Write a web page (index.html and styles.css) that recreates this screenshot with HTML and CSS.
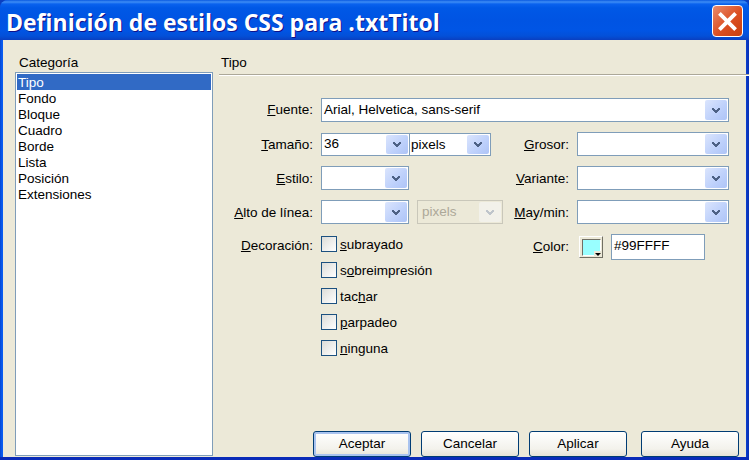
FILE: index.html
```html
<!DOCTYPE html>
<html lang="es">
<head>
<meta charset="utf-8">
<title>Definición de estilos CSS</title>
<link rel="stylesheet" href="styles.css">
</head>
<body>
<svg class="defs" width="0" height="0" aria-hidden="true"><defs>
<symbol id="chev" viewBox="0 0 10 7"><path d="M1 1h2v1h1v1h2V2h1V1h2v2H8v1H7v1H6v1H4V5H3V4H2V3H1z" fill="#4d6185"/></symbol>
</defs></svg>
<div class="window">
  <header class="titlebar">
    <h1 class="title">Definición de estilos CSS para .txtTitol</h1>
    <div class="close"><svg viewBox="0 0 20 20" width="20" height="20"><path d="M3 5l2-2 5 5 5-5 2 2-5 5 5 5-2 2-5-5-5 5-2-2 5-5z" fill="#fff"/></svg></div>
  </header>
  <main class="client">
    <section class="cat">
      <div class="cat-head">Categoría</div>
      <ul class="list">
        <li class="sel">Tipo</li><li>Fondo</li><li>Bloque</li><li>Cuadro</li><li>Borde</li><li>Lista</li><li>Posición</li><li>Extensiones</li>
      </ul>
    </section>
    <section class="panel">
      <div class="panel-head">Tipo</div>
      <div class="rule"></div>
      <div class="form">
        <div class="row row-font">
          <label class="lab"><u>F</u>uente:</label>
          <div class="combo w408"><span class="val">Arial, Helvetica, sans-serif</span><span class="arrow"><svg width="10" height="7"><use href="#chev"/></svg></span></div>
        </div>
        <div class="row row-size">
          <label class="lab"><u>T</u>amaño:</label>
          <div class="left">
            <div class="combo w89 short"><span class="val raised">36</span><span class="arrow"><svg width="10" height="7"><use href="#chev"/></svg></span></div>
            <div class="combo w82 joined short"><span class="val tight">pixels</span><span class="arrow"><svg width="10" height="7"><use href="#chev"/></svg></span></div>
          </div>
          <label class="lab2"><u>G</u>rosor:</label>
          <div class="combo w152"><span class="val"></span><span class="arrow"><svg width="10" height="7"><use href="#chev"/></svg></span></div>
        </div>
        <div class="row">
          <label class="lab"><u>E</u>stilo:</label>
          <div class="left">
            <div class="combo w88"><span class="val"></span><span class="arrow"><svg width="10" height="7"><use href="#chev"/></svg></span></div>
          </div>
          <label class="lab2"><u>V</u>ariante:</label>
          <div class="combo w152"><span class="val"></span><span class="arrow"><svg width="10" height="7"><use href="#chev"/></svg></span></div>
        </div>
        <div class="row">
          <label class="lab"><u>A</u>lto de línea:</label>
          <div class="left">
            <div class="combo w88"><span class="val"></span><span class="arrow"><svg width="10" height="7"><use href="#chev"/></svg></span></div>
            <div class="combo w86 disabled"><span class="val">pixels</span><span class="arrow"><svg width="10" height="7"><use href="#chev"/></svg></span></div>
          </div>
          <label class="lab2"><u>M</u>ay/min:</label>
          <div class="combo w152"><span class="val"></span><span class="arrow"><svg width="10" height="7"><use href="#chev"/></svg></span></div>
        </div>
        <div class="row row-deco">
          <label class="lab"><u>D</u>ecoración:</label>
          <div class="left checks">
            <div class="check"><span class="box"></span><span class="check-text"><u>s</u>ubrayado</span></div>
            <div class="check"><span class="box"></span><span class="check-text">s<u>o</u>breimpresión</span></div>
            <div class="check"><span class="box"></span><span class="check-text">tac<u>h</u>ar</span></div>
            <div class="check"><span class="box"></span><span class="check-text"><u>p</u>arpadeo</span></div>
            <div class="check"><span class="box"></span><span class="check-text"><u>n</u>inguna</span></div>
          </div>
          <label class="lab2 color-lab"><u>C</u>olor:</label>
          <div class="color">
            <span class="swatch"><span class="fill"></span><span class="mini"></span></span>
            <span class="hex">#99FFFF</span>
          </div>
        </div>
      </div>
      <footer class="buttons">
        <button class="btn default">Aceptar</button>
        <button class="btn">Cancelar</button>
        <button class="btn">Aplicar</button>
        <button class="btn">Ayuda</button>
      </footer>
    </section>
  </main>
</div>
</body>
</html>
```
FILE: styles.css
```css
* { box-sizing: border-box; }
html, body { margin: 0; padding: 0; }
body { width: 749px; height: 460px; overflow: hidden; font: 13.5px/16px "Liberation Sans", Arial, sans-serif; color: #000; background: #0a3fc0; }
.defs { position: absolute; }
.window {
  width: 749px; height: 460px; display: flex; flex-direction: column; overflow: hidden; border-radius: 8px 8px 0 0;
  background: linear-gradient(#0a2bb8, #0a2bb8) bottom / 100% 3px no-repeat, linear-gradient(90deg, #0746d0 0, #0a5cf0 2px, #0a5cf0 3px, #0a3fd0 746px, #0a2fb0 749px);
}
.titlebar {
  height: 40px; flex: none; display: flex; align-items: center; justify-content: space-between; padding: 0 6px 0 6px;
  background: linear-gradient(180deg, #0a5ae0 0, #3e8df5 2px, #0a62ee 4px, #0058e6 8px, #0054e3 20px, #0055e5 30px, #0350d8 36px, #0a3fc0 40px);
}
.title { margin: 3px 0 0; font: bold 23px/28px "Open Sans", "DejaVu Sans", sans-serif; color: #fff; text-shadow: 1px 1px 0 #0f1089; white-space: nowrap; }
.close { width: 31px; height: 32px; margin-top: 2px; border: 1px solid #fff; border-radius: 4px; background: linear-gradient(135deg, #e98a6c, #dc4f22 55%, #c8400f); display: flex; align-items: center; justify-content: center; }
.close svg { width: 27px; height: 27px; }
.client { flex: 1; display: flex; background: #ece9d8; margin: 0 3px 3px 3px; padding: 14px 0 0 12px; min-height: 0; }
.cat { width: 198px; flex: none; display: flex; flex-direction: column; }
.cat-head { padding-left: 4px; height: 18px; line-height: 18px; }
.list { flex: 1; margin: 0 0 1px; padding: 1px; list-style: none; background: #fff; border: 1px solid #7f9db9; }
.list li { height: 16px; line-height: 18px; padding-left: 1px; }
.list .sel { background: #316ac5; color: #fff; }
.panel { flex: 1; margin-left: 6px; display: flex; flex-direction: column; }
.panel-head { padding-left: 2px; height: 18px; line-height: 18px; }
.rule { height: 2px; margin-top: 2px; background: #aca899; border-bottom: 1px solid #fff; }
.form { flex: 1; margin-top: 22px; display: flex; flex-direction: column; gap: 10px; }
.row { display: flex; height: 24px; }
.row-deco { height: auto; }
.lab, .lab2 { line-height: 26px; text-align: right; margin-right: 8px; white-space: nowrap; flex: none; }
.row-font .lab, .row-deco .lab { line-height: 24px; }
.lab { width: 94px; }
.lab2 { width: 66px; }
.left { width: 182px; flex: none; display: flex; }
.combo { display: flex; justify-content: space-between; height: 24px; border: 1px solid #7f9db9; background: #fff; padding: 1px; flex: none; }
.combo.short { height: 23px; margin-top: 1px; }
.val { padding-left: 1px; line-height: 20px; white-space: nowrap; }
.val.tight { padding-left: 0; }
.val.raised { line-height: 18px; }
.disabled .val { padding-left: 3px; }
.arrow { width: 22px; height: 20px; display: flex; align-items: center; justify-content: center; border-radius: 2px; background: linear-gradient(135deg, #dbe5fd, #bdd0fb 60%, #aec4f6); }
.short .arrow { height: 19px; }
.w408 { width: 408px; }
.w89 { width: 89px; }
.w88 { width: 88px; }
.w82 { width: 82px; }
.w86 { width: 86px; margin-left: 8px; }
.w152 { width: 152px; }
.joined { margin-left: -1px; }
.disabled { border-color: #c9c7ba; background: #ece9d8; color: #aca899; }
.disabled .arrow { background: #f2f1ea; }
.disabled svg { opacity: .3; }
.checks { flex-direction: column; gap: 10px; padding-top: 2px; }
.check { display: flex; align-items: flex-start; gap: 3px; height: 16px; }
.check-text { line-height: 18px; }
.box { width: 16px; height: 16px; border: 1px solid #1c5180; background: linear-gradient(135deg, #dcdcd7, #fff); }
.color-lab { align-self: flex-start; line-height: 26px; }
.color { display: flex; align-items: flex-start; }
.swatch { position: relative; width: 24px; height: 22px; margin: 2px 8px 0 2px; padding: 2px; background: #ece9d8; border: 1px solid; border-color: #fff #716f64 #716f64 #fff; }
.fill { display: block; width: 19px; height: 17px; background: #99ffff; border: 1px solid; border-color: #716f64 #fff #fff #716f64; }
.mini { position: absolute; right: 0; bottom: 0; width: 8px; height: 6px; background: #ece9d8; }
.mini::after { content: ""; position: absolute; left: 1px; top: 2px; border: 3px solid transparent; border-top-color: #000; border-bottom: 0; }
.hex { display: block; width: 94px; height: 26px; padding-left: 2px; line-height: 22px; border: 1px solid #7f9db9; background: #fff; }
.buttons { display: flex; padding: 0 0 0 94px; height: 26px; flex: none; }
.btn { width: 98px; height: 26px; padding: 0; font: inherit; color: #000; border: 1px solid #003c74; border-radius: 3px; background: linear-gradient(180deg, #fff, #f3f2ec 70%, #e6e3d6); margin-right: 10px; }
.btn:nth-child(3) { margin-right: 14px; }
.btn.default { box-shadow: inset 0 0 0 2px #a9c3ef; }
```
